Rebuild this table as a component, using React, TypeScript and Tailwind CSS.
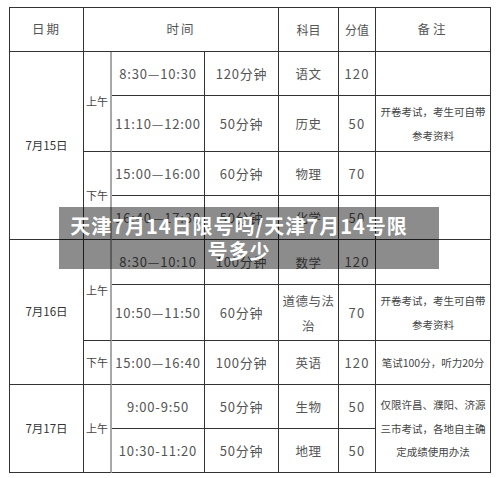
import clsx from "clsx";

type Row = {
  time: string;
  dur: string;
  subj: React.ReactNode;
  score: string;
  note?: React.ReactNode;
  noteSpan?: boolean;
  noNote?: boolean;
};

const line = "border-r border-b border-[#333]";

function Cell({ className, children }: { className?: string; children?: React.ReactNode }) {
  return (
    <div className={clsx("flex items-center justify-center whitespace-nowrap text-center", line, className)}>
      {children}
    </div>
  );
}

function Half({ label, span }: { label: string; span: "row-span-1" | "row-span-2" }) {
  return (
    <Cell className={clsx(span, "border-r-2 border-r-[#a8a8a8] text-[11px] text-[#444]")}>{label}</Cell>
  );
}

function Date({ label, span }: { label: string; span: "row-span-2" | "row-span-3" | "row-span-4" }) {
  return <Cell className={clsx(span, "text-[11.5px] text-[#333]")}>{label}</Cell>;
}

function Cells({ r }: { r: Row }) {
  return (
    <>
      <Cell className="text-[13px] tracking-[0.8px] text-[#555]">{r.time}</Cell>
      <Cell className="text-[13px] tracking-[0.8px] text-[#555]">{r.dur}</Cell>
      <Cell className="text-[12.5px] leading-[25px] tracking-[0.5px] text-[#555]">{r.subj}</Cell>
      <Cell className="text-[13px] tracking-[1.2px] text-[#555]">{r.score}</Cell>
      {!r.noNote && (
        <Cell className={clsx("text-[10.5px] leading-[24px] text-[#444]", r.noteSpan && "row-span-2")}>
          {r.note}
        </Cell>
      )}
    </>
  );
}

const openBook = (
  <span>
    开卷考试，考生可自带
    <br />
    参考资料
  </span>
);

export default function App() {
  return (
    <div
      className="relative h-[478px] w-[500px] overflow-hidden bg-white pl-[9px] pt-[7px]"
      style={{ fontFamily: "'Noto Sans CJK SC', 'Noto Sans', sans-serif" }}
    >
      <div className="grid w-[482px] grid-cols-[74px_28px_93px_74px_60px_37px_115px] grid-rows-[44px_44px_56px_44px_44px_45px_56px_44px_44px_44px] border-l border-t border-[#333]">
        {/* header */}
        <Cell className="text-[12.5px] tracking-[2px] text-[#555]">日期</Cell>
        <Cell className="col-span-3 text-[12.5px] tracking-[2px] text-[#555]">时间</Cell>
        <Cell className="text-[12px] text-[#555]">科目</Cell>
        <Cell className="text-[12px] text-[#555]">分值</Cell>
        <Cell className="text-[12.5px] tracking-[3px] text-[#555]">备注</Cell>

        {/* 7月15日 */}
        <Date label="7月15日" span="row-span-4" />
        <Half label="上午" span="row-span-2" />
        <Cells r={{ time: "8:30—10:30", dur: "120分钟", subj: "语文", score: "120" }} />
        <Cells r={{ time: "11:10—12:00", dur: "50分钟", subj: "历史", score: "50", note: openBook }} />
        <Half label="下午" span="row-span-2" />
        <Cells r={{ time: "15:00—16:00", dur: "60分钟", subj: "物理", score: "70" }} />
        <Cells r={{ time: "16:40—17:30", dur: "50分钟", subj: "化学", score: "50" }} />

        {/* 7月16日 */}
        <Date label="7月16日" span="row-span-3" />
        <Half label="上午" span="row-span-2" />
        <Cells r={{ time: "8:30—10:10", dur: "100分钟", subj: "数学", score: "120" }} />
        <Cells
          r={{
            time: "10:50—11:50",
            dur: "60分钟",
            subj: (
              <span>
                道德与法
                <br />治
              </span>
            ),
            score: "70",
            note: openBook,
          }}
        />
        <Half label="下午" span="row-span-1" />
        <Cells r={{ time: "15:00—16:40", dur: "100分钟", subj: "英语", score: "120", note: "笔试100分，听力20分" }} />

        {/* 7月17日 */}
        <Date label="7月17日" span="row-span-2" />
        <Half label="上午" span="row-span-2" />
        <Cells
          r={{
            time: "9:00-9:50",
            dur: "50分钟",
            subj: "生物",
            score: "50",
            noteSpan: true,
            note: (
              <span className="leading-[23.5px]">
                仅限许昌、濮阳、济源
                <br />
                三市考试，各地自主确
                <br />
                定成绩使用办法
              </span>
            ),
          }}
        />
        <Cells r={{ time: "10:30-11:20", dur: "50分钟", subj: "地理", score: "50", noNote: true }} />
      </div>

      {/* title banner over the table */}
      <div className="absolute left-[59px] top-[207px] flex h-[62px] w-[380px] flex-col items-center justify-center bg-black/45 pr-5 text-[20px] font-bold leading-[25px] tracking-[1px] text-white">
        <span>天津7月14日限号吗/天津7月14号限</span>
        <span>号多少</span>
      </div>
    </div>
  );
}
